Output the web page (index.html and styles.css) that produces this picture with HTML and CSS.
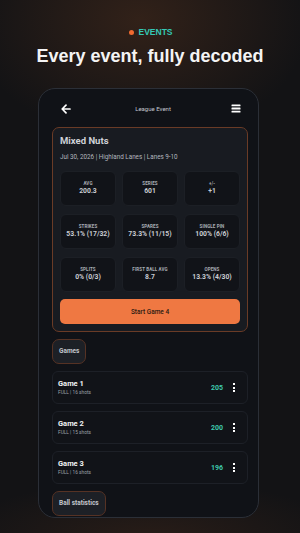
FILE: index.html
```html
<!DOCTYPE html>
<html lang="en">
<head>
    <meta charset="UTF-8">
    <meta name="viewport" content="width=device-width, initial-scale=1.0">
    <title>Every event, fully decoded</title>
    <link rel="stylesheet" href="styles.css">
</head>
<body>
    <div class="hero">
        <div class="eyebrow"><span class="dot"></span>EVENTS</div>
        <h1>Every event, fully decoded</h1>
    </div>
    <div class="phone">
        <div class="topbar">
            <svg class="back" width="10" height="10" viewBox="0 0 10 10"><path d="M9 5H1.6M5 1.2L1.2 5 5 8.8" fill="none" stroke="#fff" stroke-width="1.7" stroke-linecap="round" stroke-linejoin="round"/></svg>
            <span class="topbar-title">League Event</span>
            <svg class="menu" width="10" height="9" viewBox="0 0 10 9"><rect x="0.5" y="0.5" width="9" height="1.8" rx="0.5" fill="#fff"/><rect x="0.5" y="3.6" width="9" height="1.8" rx="0.5" fill="#fff"/><rect x="0.5" y="6.7" width="9" height="1.8" rx="0.5" fill="#fff"/></svg>
        </div>

        <div class="event-card">
            <div class="event-name">Mixed Nuts</div>
            <div class="event-meta">Jul 30, 2026 | Highland Lanes | Lanes 9-10</div>
            <div class="stats">
                <div class="stat"><span class="label">AVG</span><span class="value">200.3</span></div>
                <div class="stat"><span class="label">SERIES</span><span class="value">601</span></div>
                <div class="stat"><span class="label">+/-</span><span class="value">+1</span></div>
                <div class="stat"><span class="label">STRIKES</span><span class="value">53.1% (17/32)</span></div>
                <div class="stat"><span class="label">SPARES</span><span class="value">73.3% (11/15)</span></div>
                <div class="stat"><span class="label">SINGLE PIN</span><span class="value">100% (6/6)</span></div>
                <div class="stat"><span class="label">SPLITS</span><span class="value">0% (0/3)</span></div>
                <div class="stat"><span class="label">FIRST BALL AVG</span><span class="value">8.7</span></div>
                <div class="stat"><span class="label">OPENS</span><span class="value">13.3% (4/30)</span></div>
            </div>
            <button class="start">Start Game 4</button>
        </div>

        <div class="chip">Games</div>

        <div class="game">
            <div class="game-info"><span class="game-name">Game 1</span><span class="game-sub">FULL | 16 shots</span></div>
            <span class="score">205</span>
            <span class="kebab"><i></i><i></i><i></i></span>
        </div>
        <div class="game">
            <div class="game-info"><span class="game-name">Game 2</span><span class="game-sub">FULL | 15 shots</span></div>
            <span class="score">200</span>
            <span class="kebab"><i></i><i></i><i></i></span>
        </div>
        <div class="game">
            <div class="game-info"><span class="game-name">Game 3</span><span class="game-sub">FULL | 16 shots</span></div>
            <span class="score">196</span>
            <span class="kebab"><i></i><i></i><i></i></span>
        </div>

        <div class="chip">Ball statistics</div>
    </div>
</body>
</html>
```

FILE: styles.css
```css
body {
    margin: 0;
    width: 300px;
    height: 533px;
    overflow: hidden;
    font-family: Roboto, "Liberation Sans", sans-serif;
    color: #fff;
    background-color: #131315;
    background-image:
        radial-gradient(ellipse 170px 120px at 140px 20px, rgba(60, 38, 26, 0.75), rgba(60, 38, 26, 0)),
        radial-gradient(ellipse 200px 60px at 150px 540px, rgba(55, 35, 25, 0.6), rgba(55, 35, 25, 0));
}
.hero {
    padding-top: 26px;
    text-align: center;
}
.eyebrow {
    display: flex;
    justify-content: center;
    align-items: center;
    gap: 4px;
    font-family: "Liberation Sans", Arial, sans-serif;
    font-size: 8.5px;
    font-weight: bold;
    color: #35c8b6;
    line-height: 12px;
    margin-left: 2px;
}
.dot {
    width: 5px;
    height: 5px;
    border-radius: 50%;
    background: #f06a30;
}
h1 {
    margin: 6px 0 0;
    font-family: "Liberation Sans", Arial, sans-serif;
    font-size: 18px;
    line-height: 24px;
    font-weight: bold;
    color: #f4f4f4;
}
.phone {
    box-sizing: border-box;
    width: 221px;
    height: 430px;
    margin: 20px 0 0 38px;
    padding: 0 11px 0 13px;
    border: 1px solid #2b2f37;
    border-radius: 17px;
    background: #101217;
    overflow: hidden;
}
.topbar {
    height: 37px;
    display: flex;
    align-items: center;
    justify-content: space-between;
    padding: 1px 6px 0 9px;
}
.topbar-title {
    font-size: 6px;
    color: #c2c6ce;
    margin-left: 4px;
}
.event-card {
    box-sizing: border-box;
    width: 196px;
    padding: 7px;
    border: 1px solid #6a3b26;
    border-radius: 7px;
    background: #181b21;
}
.event-name {
    font-size: 9.5px;
    font-weight: bold;
    color: #cfd2d8;
    line-height: 12px;
}
.event-meta {
    margin-top: 6px;
    font-size: 6.3px;
    color: #b3b7bf;
    line-height: 9px;
}
.stats {
    margin-top: 9px;
    display: grid;
    grid-template-columns: repeat(3, 1fr);
    column-gap: 6px;
    row-gap: 8px;
}
.stat {
    height: 35px;
    display: flex;
    flex-direction: column;
    justify-content: center;
    align-items: center;
    border-radius: 6px;
    background: #111318;
    border: 1px solid #1c1f25;
    box-sizing: border-box;
}
.label {
    font-size: 4.5px;
    font-weight: bold;
    color: #a9adb5;
    line-height: 6px;
    letter-spacing: 0.1px;
}
.value {
    font-size: 6.8px;
    font-weight: bold;
    color: #c9ccd2;
    line-height: 9px;
}
.start {
    display: block;
    width: 100%;
    height: 25px;
    margin-top: 7px;
    border: none;
    border-radius: 5px;
    background: #ef7842;
    color: #2a1a12;
    font-family: Roboto, "Liberation Sans", sans-serif;
    font-size: 6.5px;
    font-weight: 500;
}
.chip {
    display: inline-block;
    box-sizing: border-box;
    height: 25px;
    line-height: 23px;
    padding: 0 6px;
    margin-top: 7px;
    border: 1px solid #563224;
    border-radius: 7px;
    background: #1d2026;
    font-size: 6.5px;
    font-weight: bold;
    color: #c3c6cc;
}
.game {
    box-sizing: border-box;
    width: 196px;
    height: 33px;
    margin-top: 7px;
    display: flex;
    align-items: center;
    padding: 0 12px 0 5px;
    border: 1px solid #1d2027;
    border-radius: 6px;
    background: #111318;
}
.game-info {
    flex: 1;
    display: flex;
    flex-direction: column;
}
.game-name {
    font-size: 7.5px;
    font-weight: bold;
    color: #f2f3f5;
    line-height: 10px;
}
.game-sub {
    font-size: 4.8px;
    color: #9ea2aa;
    line-height: 7px;
}
.score {
    font-size: 7px;
    font-weight: bold;
    color: #3ec9ac;
    margin-right: 10px;
}
.kebab {
    display: flex;
    flex-direction: column;
    gap: 1.5px;
}
.kebab i {
    width: 2px;
    height: 2px;
    background: #fff;
}
```
